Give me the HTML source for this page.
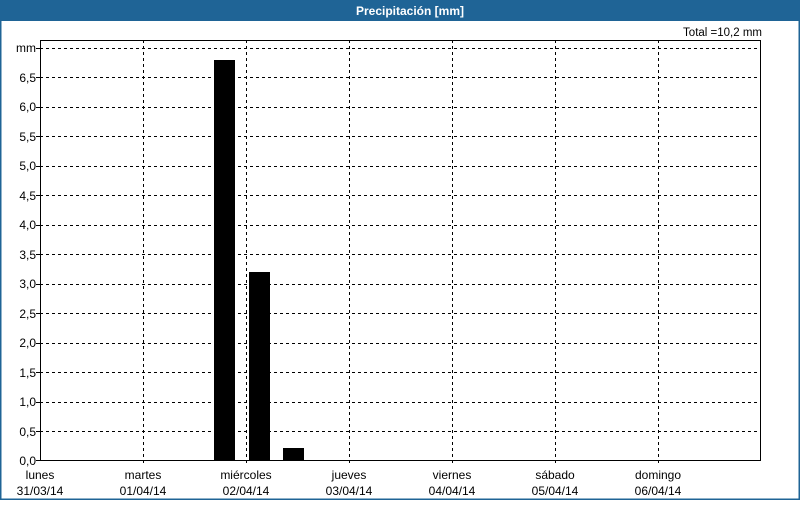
<!DOCTYPE html>
<html><head><style>
body{margin:0;width:800px;height:500px;overflow:hidden;background:#fff;font-family:"Liberation Sans",sans-serif}
</style></head><body>
<svg width="800" height="500" xmlns="http://www.w3.org/2000/svg" font-family="Liberation Sans, sans-serif" font-size="12">
<rect x="0" y="0" width="800" height="500" fill="#fff"/>
<rect x="0.5" y="0.5" width="799" height="499" fill="none" stroke="#1f6496" stroke-width="2"/>
<rect x="0" y="0" width="800" height="21" fill="#1f6496"/>
<text x="410" y="15" fill="#fff" font-weight="bold" font-size="12" text-anchor="middle">Precipitación [mm]</text>
<text x="762" y="36" text-anchor="end" font-size="11.5">Total =10,2 mm</text>
<g stroke="#000" stroke-dasharray="3,3" stroke-width="1">
<path d="M40 48.5H760M40 77.5H760M40 107.5H760M40 136.5H760M40 166.5H760M40 195.5H760M40 225.5H760M40 254.5H760M40 284.5H760M40 313.5H760M40 343.5H760M40 372.5H760M40 402.5H760M40 431.5H760"/>
<path d="M143.5 40V465M246.5 40V465M349.5 40V465M452.5 40V465M555.5 40V465M658.5 40V465"/>
</g>
<rect x="40.5" y="40.5" width="720" height="420" fill="none" stroke="#000"/>
<g stroke="#000"><path d="M36 48.5H40M36 77.5H40M36 107.5H40M36 136.5H40M36 166.5H40M36 195.5H40M36 225.5H40M36 254.5H40M36 284.5H40M36 313.5H40M36 343.5H40M36 372.5H40M36 402.5H40M36 431.5H40M36 460.5H40"/></g>
<rect x="214" y="60" width="21" height="401" fill="#000"/>
<rect x="249" y="272" width="21" height="189" fill="#000"/>
<rect x="283" y="448" width="21" height="13" fill="#000"/>
<g text-anchor="end">
<text x="36" y="52">mm</text>
<text x="36" y="82">6,5</text><text x="36" y="111">6,0</text><text x="36" y="141">5,5</text>
<text x="36" y="170">5,0</text><text x="36" y="200">4,5</text><text x="36" y="229">4,0</text>
<text x="36" y="259">3,5</text><text x="36" y="288">3,0</text><text x="36" y="318">2,5</text>
<text x="36" y="347">2,0</text><text x="36" y="377">1,5</text><text x="36" y="406">1,0</text>
<text x="36" y="436">0,5</text><text x="36" y="465">0,0</text>
</g>
<g text-anchor="middle">
<text x="40" y="479">lunes</text><text x="40" y="495">31/03/14</text>
<text x="143" y="479">martes</text><text x="143" y="495">01/04/14</text>
<text x="246" y="479">miércoles</text><text x="246" y="495">02/04/14</text>
<text x="349" y="479">jueves</text><text x="349" y="495">03/04/14</text>
<text x="452" y="479">viernes</text><text x="452" y="495">04/04/14</text>
<text x="555" y="479">sábado</text><text x="555" y="495">05/04/14</text>
<text x="658" y="479">domingo</text><text x="658" y="495">06/04/14</text>
</g>
</svg>
</body></html>
